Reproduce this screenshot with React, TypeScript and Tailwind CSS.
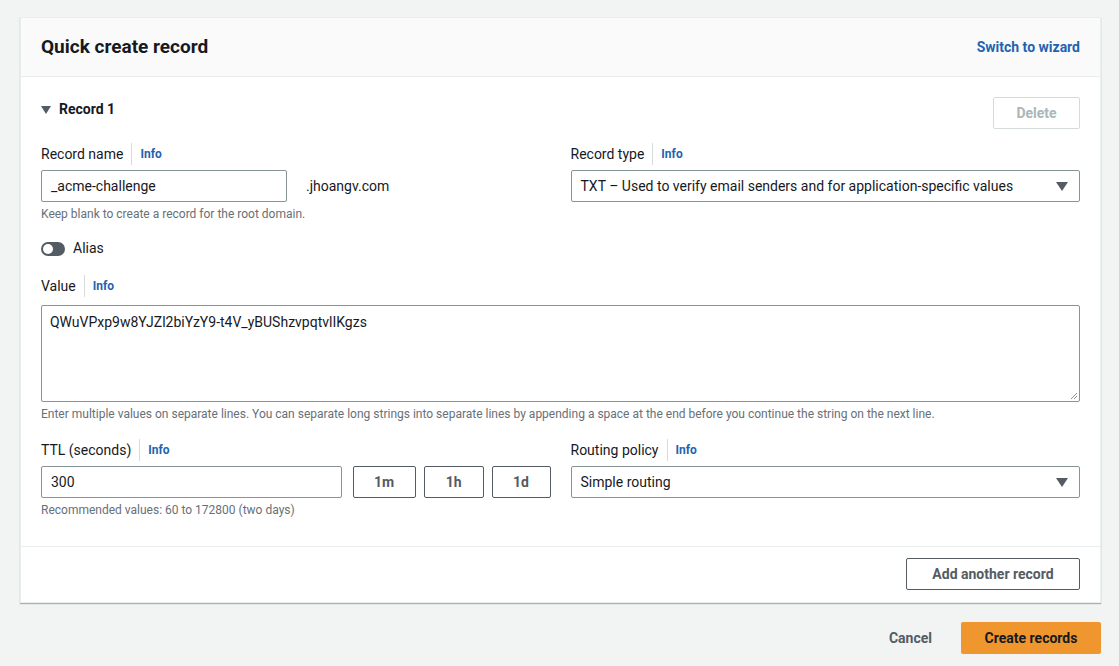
import React from 'react';

const font = { fontFamily: 'Roboto, "Liberation Sans", sans-serif' };

function Info() {
  return (
    <span className="ml-2 border-l border-[#d5dbdb] pl-2 text-[12px] font-bold text-[#1f63b0]">Info</span>
  );
}

function Label({ children }: { children: React.ReactNode }) {
  return (
    <div className="flex items-center text-[14px] leading-[22px] text-[#16191f]">
      {children}
      <Info />
    </div>
  );
}

function Caret() {
  return (
    <svg width="12" height="10" viewBox="0 0 12 10" className="fill-[#545b64]">
      <path d="M0 1h12L6 10z" />
    </svg>
  );
}

function Select({ value }: { value: string }) {
  return (
    <div className="mt-[6px] flex h-[32px] items-center justify-between rounded-[2px] border border-[#879596] bg-white pl-[9px] pr-[11px] text-[14px] text-[#16191f]">
      <span>{value}</span>
      <Caret />
    </div>
  );
}

export default function App() {
  return (
    <div className="min-h-[666px] bg-[#f2f3f3] pl-5 pr-[18px] pt-[17px]" style={font}>
      <div className="overflow-hidden border border-[#eaeded] bg-white shadow-[0_1px_1px_0_rgba(0,28,36,0.3)]">
        <div className="flex h-[59px] items-center justify-between border-b border-[#eaeded] bg-[#fafafa] px-5">
          <h2 className="text-[19px] font-bold text-[#16191f]">Quick create record</h2>
          <span className="text-[14px] font-bold text-[#1f63b0]">Switch to wizard</span>
        </div>

        <div className="px-5 pt-[20px] pb-[28px]">
          <div className="flex items-start justify-between">
            <div className="flex items-center gap-2 pt-[2px] text-[14px] font-bold text-[#16191f]">
              <svg width="10" height="8" viewBox="0 0 10 8" className="fill-[#545b64]">
                <path d="M0 0h10L5 8z" />
              </svg>
              Record 1
            </div>
            <button className="h-[32px] w-[87px] rounded-[2px] border border-[#d5dbdb] bg-white text-[14px] font-bold text-[#aab7b8]">
              Delete
            </button>
          </div>

          <div className="mt-[14px] grid grid-cols-2 gap-x-5">
            <div>
              <Label>Record name</Label>
              <div className="mt-[5px] flex items-center">
                <div className="flex h-[32px] w-[246px] items-center rounded-[2px] border border-[#879596] px-[9px] text-[14px] text-[#16191f]">
                  _acme-challenge
                </div>
                <span className="ml-[19px] text-[14px] text-[#16191f]">.jhoangv.com</span>
              </div>
              <p className="mt-[4px] text-[12px] leading-[16px] text-[#687078]">Keep blank to create a record for the root domain.</p>
            </div>
            <div>
              <Label>Record type</Label>
              <div className="-mt-px">
                <Select value="TXT – Used to verify email senders and for application-specific values" />
              </div>
            </div>
          </div>

          <div className="mt-[16px] flex items-center gap-2">
            <div className="flex h-[14px] w-[24px] items-center rounded-full bg-[#545b64] px-[2px]">
              <div className="h-[10px] w-[10px] rounded-full bg-white" />
            </div>
            <span className="text-[14px] text-[#16191f]">Alias</span>
          </div>

          <div className="mt-[16px]">
            <Label>Value</Label>
            <div className="relative mt-[8px] h-[97px] rounded-[2px] border border-[#879596] px-[8px] py-[6px] text-[14px] text-[#16191f]">
              QWuVPxp9w8YJZl2biYzY9-t4V_yBUShzvpqtvlIKgzs
              <svg width="8" height="8" viewBox="0 0 8 8" className="absolute right-[1px] bottom-[1px] stroke-[#879596]">
                <path d="M7 1L1 7M7 4L4 7" strokeWidth="1" />
              </svg>
            </div>
            <p className="mt-[4px] text-[12px] leading-[16px] text-[#687078]">
              Enter multiple values on separate lines. You can separate long strings into separate lines by appending a space at the end before you continue the string on the next line.
            </p>
          </div>

          <div className="mt-[17px] grid grid-cols-2 gap-x-5">
            <div>
              <Label>TTL (seconds)</Label>
              <div className="mt-[5px] flex items-center">
                <div className="flex h-[32px] w-[301px] items-center rounded-[2px] border border-[#879596] px-[9px] text-[14px] text-[#16191f]">
                  300
                </div>
                <button className="ml-[11px] h-[32px] w-[63px] rounded-[2px] border border-[#545b64] text-[14px] font-bold text-[#545b64]">1m</button>
                <button className="ml-[8px] h-[32px] w-[60px] rounded-[2px] border border-[#545b64] text-[14px] font-bold text-[#545b64]">1h</button>
                <button className="ml-[8px] h-[32px] w-[59px] rounded-[2px] border border-[#545b64] text-[14px] font-bold text-[#545b64]">1d</button>
              </div>
              <p className="mt-[4px] text-[12px] leading-[16px] text-[#687078]">Recommended values: 60 to 172800 (two days)</p>
            </div>
            <div>
              <Label>Routing policy</Label>
              <div className="-mt-px">
                <Select value="Simple routing" />
              </div>
            </div>
          </div>
        </div>

        <div className="flex justify-end border-t border-[#eaeded] px-5 pt-[11px] pb-[12px]">
          <button className="h-[32px] w-[174px] rounded-[2px] border border-[#545b64] bg-white text-[14px] font-bold text-[#545b64]">
            Add another record
          </button>
        </div>
      </div>

      <div className="mt-[19px] flex items-center justify-end gap-[29px]">
        <span className="text-[14px] font-bold text-[#545b64]">Cancel</span>
        <button className="h-[32px] w-[140px] rounded-[2px] bg-[#ef962e] text-[14px] font-bold text-[#16191f]">
          Create records
        </button>
      </div>
    </div>
  );
}
